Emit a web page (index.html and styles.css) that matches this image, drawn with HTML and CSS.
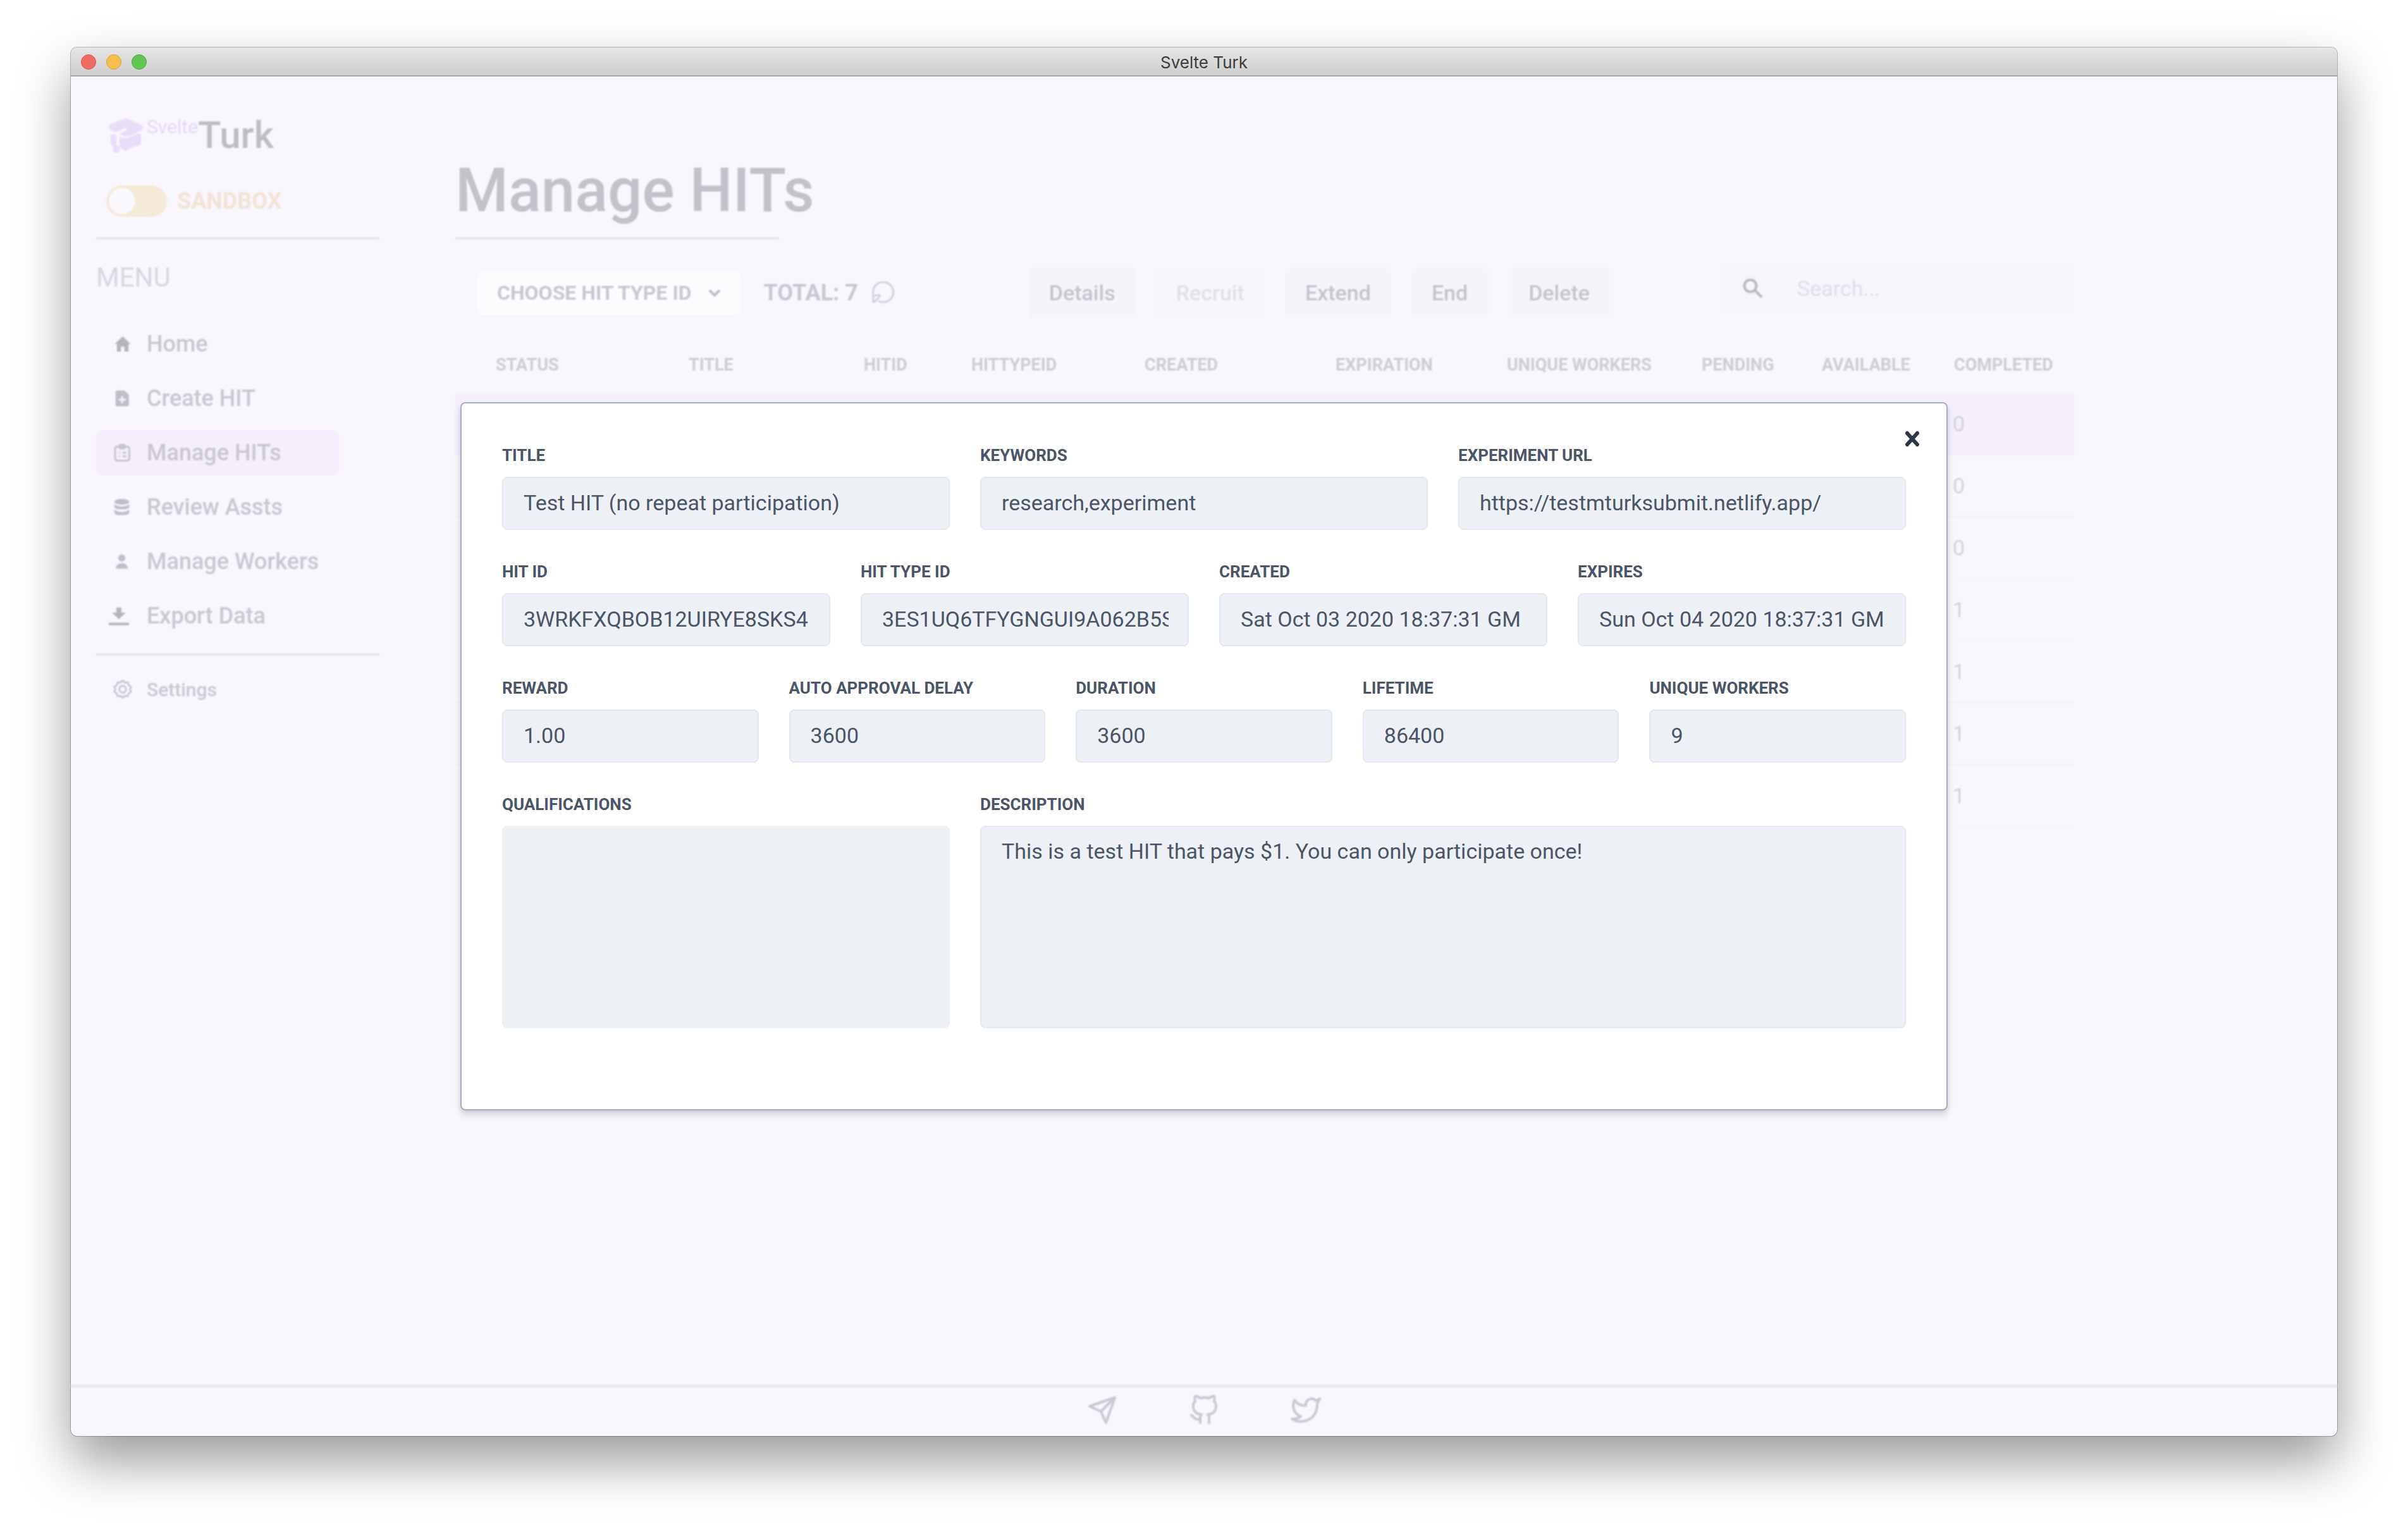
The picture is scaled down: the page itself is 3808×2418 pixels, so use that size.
FILE: index.html
```html
<!DOCTYPE html>
<html lang="en">
<head>
<meta charset="utf-8">
<title>Svelte Turk</title>
<link rel="stylesheet" href="styles.css">
</head>
<body>
<div class="window">
  <header class="titlebar">
    <div class="lights"><span class="light red"></span><span class="light amber"></span><span class="light green"></span></div>
    <span class="window-title">Svelte Turk</span>
  </header>
  <div class="stage">
    <div class="app">
      <div class="columns">
        <aside class="sidebar">
          <div class="logo">
            <svg class="logo-mark" viewBox="0 0 54 55" aria-hidden="true"><path d="M24 1q3-1 6 0l20 9q4 2 4 5t-4 5l-15 7q-7 3-14 0l-4-2 11-6q2-3-2-3l-15 6q-7-1-11-6-1-4 4-7zM7 25q5 0 5 5v13l5 2v6q-1 4-5 4t-5-4v-6l-4-4V30q0-5 4-5zM17 29q8 4 18 0l12-5q4 0 4 4v10q0 4-4 5l-13 4-6 5-8-4-3-3z"/></svg>
            <span class="logo-sup">Svelte</span><span class="logo-main">Turk</span>
          </div>
          <label class="mode"><input class="switch" type="checkbox"><span>SANDBOX</span></label>
          <hr class="rule">
          <h2 class="menu-title">MENU</h2>
          <nav class="menu">
            <a href="#home" class="item"><svg class="icon dark" viewBox="0 0 20 20"><path d="M10 1.500 19 10h-2.500v8.500h-4.500V13H8v5.500H3.500V10H1z"/></svg>Home</a>
            <a href="#create" class="item"><svg class="icon" viewBox="0 0 20 20"><path fill-rule="evenodd" d="M4 1h8l5 5v11a2 2 0 0 1-2 2H4a2 2 0 0 1-2-2V3a2 2 0 0 1 2-2zm4.500 6.500v3h-3v2h3v3h2v-3h3v-2h-3v-3z"/></svg>Create HIT</a>
            <a href="#manage" class="item active"><svg class="icon line" viewBox="0 0 20 20"><rect x="1.500" y="3" width="16" height="16" rx="2.500"/><rect x="6" y="1" width="7" height="4" rx="2"/><path d="M6 10h1m3 0h4M6 14h1m3 0h4"/></svg>Manage HITs</a>
            <a href="#review" class="item"><svg class="icon" viewBox="0 0 20 20"><ellipse cx="9" cy="4" rx="8.500" ry="3.200"/><path d="M.5 7q8.500 5 17 0v2.500q0 3-8.500 3t-8.500-3zM.5 13q8.500 5 17 0v3q0 3-8.500 3t-8.500-3z"/></svg>Review Assts</a>
            <a href="#workers" class="item"><svg class="icon" viewBox="0 0 20 20"><circle cx="9" cy="6" r="4"/><path d="M2 18q1-6 7-6t7 6z"/></svg>Manage Workers</a>
            <a href="#export" class="item"><svg class="icon dark wide" viewBox="0 0 24 24"><path d="M9 2h6v6h5l-8 8-8-8h5zM0 20h24v3H0z"/></svg>Export Data</a>
          </nav>
          <hr class="rule">
          <a href="#settings" class="item small"><svg class="icon line gear" viewBox="0 0 24 24"><path d="M12 2l2.800 2 3.300-.1 1 3.300 2.700 2L20.700 12l1.100 3-2.700 1.900-1 3.200-3.300-.1L12 22l-2.800-2-3.300.1-1-3.200L2.200 15l1.100-3-1.100-2.800 2.700-2 1-3.300 3.300.1z"/><circle cx="12" cy="12" r="4"/></svg>Settings</a>
        </aside>
        <main class="main">
          <h1 class="heading">Manage HITs</h1>
          <hr class="rule short">
          <div class="toolbar">
            <button class="chooser">CHOOSE HIT TYPE ID<svg class="chevron" viewBox="0 0 20 12"><path d="M2 2l8 8 8-8"/></svg></button>
            <div class="total">TOTAL: 7<svg class="refresh" viewBox="0 0 36 36"><path d="M2 20A16 16 0 1 1 10 31M2 34V22h12M3 33l9-9"/></svg></div>
            <div class="actions">
              <button class="btn">Details</button><button class="btn" disabled>Recruit</button><button class="btn">Extend</button><button class="btn">End</button><button class="btn">Delete</button>
            </div>
            <div class="search"><svg class="lens" viewBox="0 0 32 32"><circle cx="12" cy="12" r="9.500"/><path d="M19 19l11 11"/></svg><input type="search" aria-label="Search" placeholder="Search..."></div>
          </div>
          <table class="hits">
            <colgroup><col class="c1"><col class="c2"><col class="c3"><col class="c4"><col class="c5"><col class="c6"><col class="c7"><col class="c8"><col class="c9"><col class="c10"></colgroup>
            <thead><tr><th>STATUS</th><th>TITLE</th><th>HITID</th><th>HITTYPEID</th><th>CREATED</th><th>EXPIRATION</th><th>UNIQUE WORKERS</th><th>PENDING</th><th>AVAILABLE</th><th>COMPLETED</th></tr></thead>
            <tbody>
              <tr class="selected"><td colspan="9"></td><td>0</td></tr>
              <tr><td colspan="9"></td><td>0</td></tr>
              <tr><td colspan="9"></td><td>0</td></tr>
              <tr><td colspan="9"></td><td>1</td></tr>
              <tr><td colspan="9"></td><td>1</td></tr>
              <tr><td colspan="9"></td><td>1</td></tr>
              <tr><td colspan="9"></td><td>1</td></tr>
            </tbody>
          </table>
        </main>
      </div>
      <footer class="footer">
        <a href="#mail" aria-label="Email"><svg viewBox="0 0 24 24"><path d="M22 2 11 13M22 2l-7 20-4-9-9-4z"/></svg></a>
        <a href="#github" aria-label="GitHub"><svg viewBox="0 0 24 24"><path d="M9 19c-5 1.500-5-2.500-7-3m14 6v-3.870a3.370 3.370 0 0 0-.94-2.610c3.140-.35 6.440-1.540 6.440-7A5.440 5.440 0 0 0 20 4.770 5.070 5.070 0 0 0 19.910 1S18.730.65 16 2.480a13.380 13.380 0 0 0-7 0C6.270.65 5.090 1 5.090 1A5.070 5.070 0 0 0 5 4.770a5.440 5.440 0 0 0-1.500 3.780c0 5.420 3.300 6.610 6.440 7A3.370 3.370 0 0 0 9 18.130V22"/></svg></a>
        <a href="#twitter" aria-label="Twitter"><svg viewBox="0 0 24 24"><path d="M23 3a10.900 10.900 0 0 1-3.140 1.530 4.480 4.480 0 0 0-7.860 3v1A10.660 10.660 0 0 1 3 4s-4 9 5 13a11.640 11.640 0 0 1-7 2c9 5 20 0 20-11.500a4.500 4.500 0 0 0-.08-.83A7.720 7.720 0 0 0 23 3z"/></svg></a>
      </footer>
    </div>
    <div class="overlay">
      <section class="modal" role="dialog" aria-label="HIT details">
        <button class="close" aria-label="Close"><svg viewBox="0 0 24 26"><path d="M4 4l16 18M20 4 4 22"/></svg></button>
        <form class="form">
          <div class="row three">
            <label class="field"><span>TITLE</span><input readonly value="Test HIT (no repeat participation)"></label>
            <label class="field"><span>KEYWORDS</span><input readonly value="research,experiment"></label>
            <label class="field"><span>EXPERIMENT URL</span><input readonly value="https://testmturksubmit.netlify.app/"></label>
          </div>
          <div class="row four">
            <label class="field"><span>HIT ID</span><input readonly value="3WRKFXQBOB12UIRYE8SKS4"></label>
            <label class="field"><span>HIT TYPE ID</span><input readonly value="3ES1UQ6TFYGNGUI9A062B5S"></label>
            <label class="field"><span>CREATED</span><input readonly value="Sat Oct 03 2020 18:37:31 GM"></label>
            <label class="field"><span>EXPIRES</span><input readonly value="Sun Oct 04 2020 18:37:31 GM"></label>
          </div>
          <div class="row five">
            <label class="field"><span>REWARD</span><input readonly value="1.00"></label>
            <label class="field"><span>AUTO APPROVAL DELAY</span><input readonly value="3600"></label>
            <label class="field"><span>DURATION</span><input readonly value="3600"></label>
            <label class="field"><span>LIFETIME</span><input readonly value="86400"></label>
            <label class="field"><span>UNIQUE WORKERS</span><input readonly value="9"></label>
          </div>
          <div class="row three">
            <label class="field"><span>QUALIFICATIONS</span><textarea class="plain" readonly></textarea></label>
            <label class="field double"><span>DESCRIPTION</span><textarea readonly>This is a test HIT that pays $1. You can only participate once!</textarea></label>
          </div>
        </form>
      </section>
    </div>
  </div>
</div>
</body>
</html>
```
FILE: styles.css
```css
* { box-sizing: border-box; }
body {
  margin: 0;
  min-height: 100vh;
  padding: 75px 112px 147px;
  display: flex;
  background: #fff;
  font-family: Roboto, "Liberation Sans", sans-serif;
  font-size: 34px;
  color: #4a5568;
}
button, input, textarea { font: inherit; color: inherit; }
.window {
  flex: 1;
  display: flex;
  flex-direction: column;
  border-radius: 10px;
  background: #f9f6fd;
  box-shadow: 0 0 0 1px rgba(0, 0, 0, .25), 0 40px 84px rgba(0, 0, 0, .4);
}
.titlebar {
  height: 46px;
  display: grid;
  grid-template-columns: 1fr auto 1fr;
  align-items: center;
  padding: 2px 16px 0;
  border-radius: 10px 10px 0 0;
  border-bottom: 2px solid #a9a7ac;
  background: linear-gradient(#e6e6e6, #cecece);
}
.lights { display: flex; gap: 16px; }
.light { width: 24px; height: 24px; border-radius: 50%; border: 1px solid #d9534a; background: #ed6b60; }
.light.amber { background: #f5bf4f; border-color: #dba13a; }
.light.green { background: #62c554; border-color: #4ba83c; }
.window-title { font-family: Inter, sans-serif; font-size: 26px; color: #3c3c3c; }
.stage { flex: 1; position: relative; display: flex; }
.app { flex: 1; display: flex; flex-direction: column; filter: blur(1px); color: #c9c7d2; }
.columns { flex: 1; display: flex; }
.sidebar { flex: 0 0 488px; padding: 56px 0 0 40px; }
.logo { display: flex; align-items: flex-start; padding-left: 20px; height: 80px; }
.logo-mark { width: 54px; height: 55px; margin-top: 10px; fill: #e7def9; }
.logo-sup { margin: 8px 0 0 6px; font-size: 30px; line-height: 32px; color: #e3d8f8; }
.logo-main { font-size: 60px; line-height: 74px; font-weight: 500; color: #bfbdc4; }
.mode { display: flex; align-items: center; gap: 16px; margin: 36px 0 0 16px; height: 50px; font-size: 36px; font-weight: 700; color: #f2e3d5; }
.switch { appearance: none; margin: 0; width: 96px; height: 50px; border-radius: 25px; background: radial-gradient(circle at 25px 25px, #fbf9fe 20px, #f5ead8 21px); }
.rule { margin: 32px 0 0; width: 448px; height: 4px; border: 0; background: #e6e4f0; }
.menu-title { margin: 34px 0 0; font-size: 42px; line-height: 52px; font-weight: 400; color: #d8d6e2; }
.menu { display: flex; flex-direction: column; gap: 16px; margin-top: 44px; margin-bottom: -8px; }
.item { display: flex; align-items: center; width: 384px; height: 70px; padding-left: 28px; border-radius: 8px; font-size: 36px; font-weight: 500; color: #c9c7d2; text-decoration: none; }
.item.active { background: #f4eefd; }
.icon { width: 28px; height: 28px; margin-right: 24px; fill: #c1becc; }
.icon.dark { fill: #b7b5bb; }
.icon.line { fill: none; stroke: #c6c3d1; stroke-width: 2; }
.icon.wide { width: 32px; height: 32px; margin: 0 28px 0 -8px; }
.icon.gear { width: 32px; height: 32px; margin: 0 22px 0 -2px; }
.item.small { font-size: 30px; margin-top: 18px; }
.main { flex: 1; min-width: 0; max-width: 2680px; padding: 116px 0 0 120px; }
.heading { margin: 0; height: 136px; padding-left: 0; font-size: 96px; line-height: 128px; font-weight: 500; color: #c3c1ca; }
.rule.short { margin: 0; margin-top: 2px; width: 512px; }
.toolbar { display: flex; align-items: center; padding-left: 34px; margin-top: 40px; height: 88px; }
.chooser { display: flex; align-items: center; gap: 26px; height: 72px; padding: 0 32px; border: 0; border-radius: 12px; background: #fcfbfe; box-shadow: 0 0 3px #efedf5; font-size: 32px; font-weight: 700; color: #c9c7d2; }
.chevron { width: 20px; height: 12px; fill: none; stroke: #c1becc; stroke-width: 4; }
.total { display: flex; align-items: center; gap: 22px; margin-left: 36px; font-size: 36px; font-weight: 700; color: #c9c7d2; }
.refresh { width: 36px; height: 36px; fill: none; stroke: #d3d0df; stroke-width: 3; }
.actions { display: flex; gap: 32px; margin-left: auto; }
.btn { height: 80px; padding: 0 32px; border: 0; border-radius: 8px; background: #f5f4fb; font-weight: 500; color: #c5c3cd; }
.btn:disabled { background: #f8f5fd; color: #e1dfe9; }
.search { display: flex; align-items: center; gap: 54px; flex: none; width: 558px; height: 80px; margin: -14px 0 0 176px; padding: 0 34px; border-radius: 8px; background: #f6f5fb; }
.lens { flex: none; width: 32px; height: 32px; fill: none; stroke: #bbb9c1; stroke-width: 4; }
.search input { min-width: 0; flex: 1; padding: 0; border: 0; background: none; }
.search input::placeholder { color: #e0ddeb; opacity: 1; }
.hits { width: 100%; table-layout: fixed; border-collapse: collapse; margin-top: 26px; }
.c1 { width: 337px; } .c2 { width: 277px; } .c3 { width: 170px; } .c4 { width: 274px; } .c5 { width: 302px; }
.c6 { width: 271px; } .c7 { width: 308px; } .c8 { width: 190px; } .c9 { width: 209px; } .c10 { width: 222px; }
.hits th { height: 88px; padding: 0 0 0 32px; text-align: left; font-size: 27px; font-weight: 700; color: #cecCd6; white-space: nowrap; }
.hits th:first-child { padding-left: 64px; }
.hits td { height: 98px; padding: 0 0 0 30px; border-bottom: 2px solid #f4f3fa; color: #d3d2da; }
.hits .selected td { background: #f4eefd; border-color: #f4eefd; }
.footer { display: flex; justify-content: center; gap: 113px; height: 81px; padding-top: 12px; border-top: 4px solid #e6e4f0; }
.footer svg { display: block; width: 48px; height: 48px; fill: none; stroke: #cac8d4; stroke-width: 2; stroke-linecap: round; stroke-linejoin: round; }
.overlay { position: absolute; inset: 0; display: flex; align-items: center; justify-content: center; }
.modal { position: relative; width: 2352px; max-width: 90%; padding: 64px 64px 128px; border: 2px solid #a0aec0; border-radius: 8px; background: #fff; box-shadow: 0 8px 12px rgba(0, 0, 0, .12), 0 2px 6px rgba(0, 0, 0, .08); }
.close { position: absolute; top: 36px; right: 34px; width: 40px; height: 40px; padding: 6px 8px; border: 0; background: none; }
.close svg { display: block; width: 24px; height: 26px; fill: none; stroke: #2d3748; stroke-width: 6; stroke-linecap: round; }
.form { display: flex; flex-direction: column; gap: 48px; }
.row { display: grid; gap: 48px; }
.three { grid-template-columns: repeat(3, 1fr); }
.four { grid-template-columns: repeat(4, 1fr); }
.five { grid-template-columns: repeat(5, 1fr); }
.double { grid-column: span 2; }
.field { display: flex; flex-direction: column; gap: 16px; min-width: 0; }
.field span { font-size: 26px; line-height: 36px; font-weight: 700; }
.field input, .field textarea { width: 100%; height: 84px; padding: 0 30px 2px 32px; border: 2px solid #e2e8f0; border-radius: 8px; background: #edf1f6; line-height: 48px; outline: 0; }
.field textarea { display: block; height: 320px; padding: 14px 32px; resize: none; }
.field .plain { border-color: #edf1f6; }
```
